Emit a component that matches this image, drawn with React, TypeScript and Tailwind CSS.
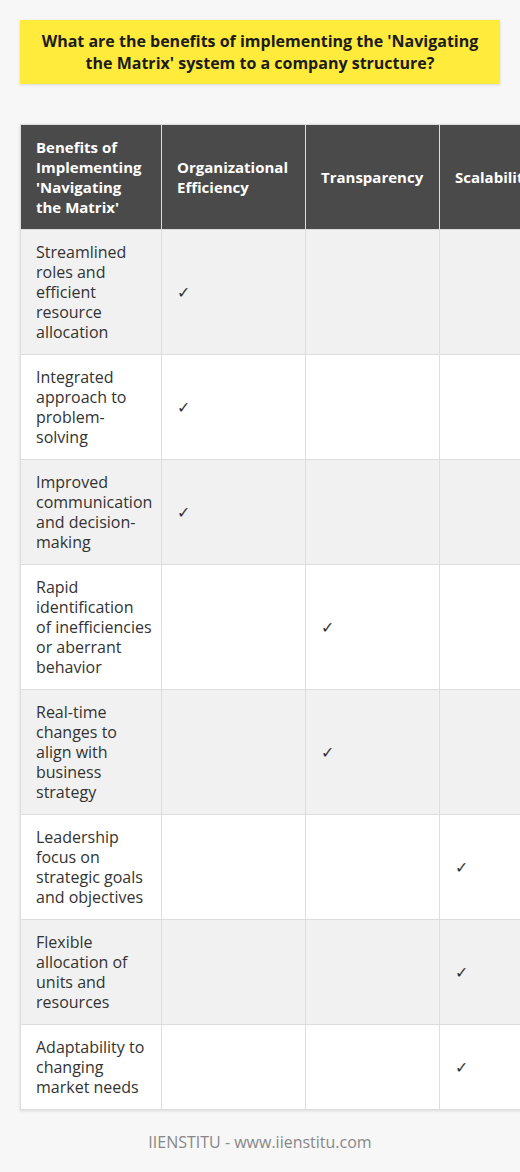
import React from 'react';

interface Row {
    benefit: React.ReactNode;
    key: string;
    col: number; // which category gets the check (0, 1, 2)
}

const rows: Row[] = [
    { key: 'streamlined', benefit: 'Streamlined roles and efficient resource allocation', col: 0 },
    { key: 'integrated', benefit: 'Integrated approach to problem-solving', col: 0 },
    { key: 'improved', benefit: 'Improved communication and decision-making', col: 0 },
    {
        key: 'rapid',
        benefit: (
            <>
                Rapid identification
                <br />
                of inefficiencies or aberrant behavior
            </>
        ),
        col: 1,
    },
    { key: 'realtime', benefit: 'Real-time changes to align with business strategy', col: 1 },
    { key: 'leadership', benefit: 'Leadership focus on strategic goals and objectives', col: 2 },
    { key: 'flexible', benefit: 'Flexible allocation of units and resources', col: 2 },
    { key: 'adapt', benefit: 'Adaptability to changing market needs', col: 2 },
];

const headers = ['Organizational Efficiency', 'Transparency', 'Scalability'];

const App: React.FC = () => {
    return (
        <div className="min-h-[1172px] w-[520px] overflow-hidden bg-[#f7f7f7] pt-5 font-['Open_Sans',sans-serif] text-[16px] leading-5 text-[#333]">
            <div className="mx-5 bg-[#ffeb3b] px-4 py-[10px] text-center text-[16px] leading-[22px] font-bold text-[#1c1c1c] shadow-[0_1px_3px_rgba(0,0,0,0.12)]">
                What are the benefits of implementing the 'Navigating the Matrix' system to a company structure?
            </div>

            <div className="mt-10 ml-5 w-[560px]">
                <table className="w-[553px] table-fixed border-collapse bg-white shadow-[0_1px_3px_rgba(0,0,0,0.12)]">
                    <colgroup>
                        <col className="w-[141px]" />
                        <col className="w-[144px]" />
                        <col className="w-[134px]" />
                        <col className="w-[134px]" />
                    </colgroup>
                    <thead>
                        <tr className="bg-[#4a4a4a] text-[15px] text-white">
                            <th className="border border-[#ddd] py-3 pr-3 pl-[15px] text-left align-middle font-bold">
                                Benefits of Implementing 'Navigating the Matrix'
                            </th>
                            {headers.map((h) => (
                                <th key={h} className="border border-[#ddd] py-3 pr-3 pl-[15px] text-left align-middle font-bold">
                                    {h}
                                </th>
                            ))}
                        </tr>
                    </thead>
                    <tbody>
                        {rows.map((r, idx) => (
                            <tr key={r.key} className={idx % 2 === 0 ? 'bg-[#f1f1f1]' : 'bg-white'}>
                                <td className="border border-[#ddd] py-3 pr-2 pl-[15px] align-middle">{r.benefit}</td>
                                {headers.map((h, i) => (
                                    <td key={h} className="border border-[#ddd] py-3 pr-3 pl-[15px] align-middle">
                                        {r.col === i ? '✓' : ''}
                                    </td>
                                ))}
                            </tr>
                        ))}
                    </tbody>
                </table>
            </div>

            <p className="mt-[22px] text-center text-[16px] leading-5 text-[#888]">IIENSTITU - www.iienstitu.com</p>
        </div>
    );
};

export default App;
